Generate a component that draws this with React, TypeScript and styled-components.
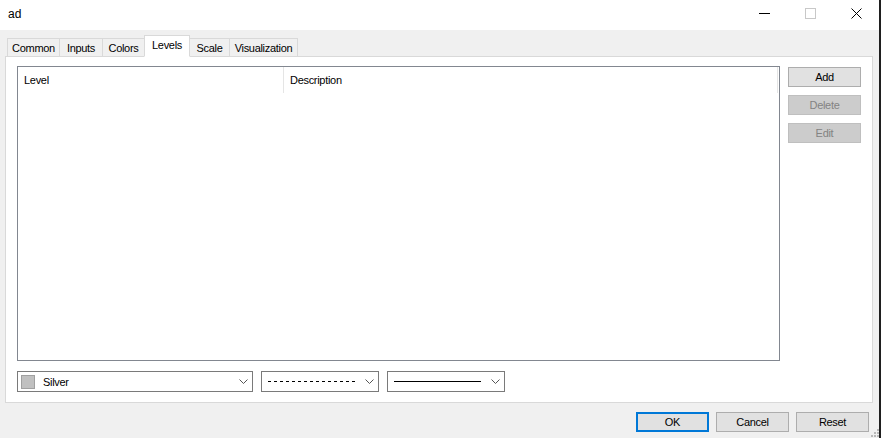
import React from "react";
import styled, { createGlobalStyle } from "styled-components";

const GlobalStyle = createGlobalStyle`
  html, body {
    margin: 0;
    padding: 0;
    background: #f0f0f0;
  }
  * {
    box-sizing: border-box;
  }
`;

const tabs = [
  { label: "Common", width: 53 },
  { label: "Inputs", width: 44 },
  { label: "Colors", width: 43 },
  { label: "Levels", width: 46 },
  { label: "Scale", width: 41 },
  { label: "Visualization", width: 69 },
];
const sideButtons = [
  { label: "Add", disabled: false },
  { label: "Delete", disabled: true },
  { label: "Edit", disabled: true },
];

const Chevron = () => (
  <svg width="9" height="6" viewBox="0 0 9 6">
    <polyline points="0.5,0.5 4.5,4.5 8.5,0.5" fill="none" stroke="#555" strokeWidth="1" />
  </svg>
);

const App: React.FC = () => {
  return (
    <Window>
      <GlobalStyle />
      <TitleBar>
        <Title>ad</Title>
        <Controls>
          <ControlBtn>
            <svg width="11" height="11" viewBox="0 0 11 11">
              <line x1="0" y1="5.5" x2="11" y2="5.5" stroke="#000" strokeWidth="1" />
            </svg>
          </ControlBtn>
          <ControlBtn>
            <svg width="11" height="11" viewBox="0 0 11 11">
              <rect x="0.5" y="0.5" width="10" height="10" fill="none" stroke="#c8c8c8" strokeWidth="1" />
            </svg>
          </ControlBtn>
          <ControlBtn>
            <svg width="11" height="11" viewBox="0 0 11 11">
              <line x1="0.5" y1="0.5" x2="10.5" y2="10.5" stroke="#000" strokeWidth="1" />
              <line x1="10.5" y1="0.5" x2="0.5" y2="10.5" stroke="#000" strokeWidth="1" />
            </svg>
          </ControlBtn>
        </Controls>
      </TitleBar>
      <Body>
        <TabStrip>
          {tabs.map((t) => (
            <Tab key={t.label} $active={t.label === "Levels"} $width={t.width}>
              {t.label}
            </Tab>
          ))}
        </TabStrip>
        <Panel>
          <MainRow>
            <ListBox>
              <ListHeader>
                <HeaderCell $width={266}>Level</HeaderCell>
                <HeaderCell $width={494}>Description</HeaderCell>
              </ListHeader>
            </ListBox>
            <SideButtons>
              {sideButtons.map((b) => (
                <Button key={b.label} disabled={b.disabled}>
                  {b.label}
                </Button>
              ))}
            </SideButtons>
          </MainRow>
          <ComboRow>
            <Combo $width={236}>
              <Swatch />
              <ComboText>Silver</ComboText>
              <Chevron />
            </Combo>
            <Combo $width={118}>
              <DashLine $dashed />
              <Chevron />
            </Combo>
            <Combo $width={118}>
              <DashLine />
              <Chevron />
            </Combo>
          </ComboRow>
        </Panel>
        <Footer>
          <Button $default>OK</Button>
          <Button>Cancel</Button>
          <Button>Reset</Button>
        </Footer>
        <Grip>
          <svg width="8" height="8" viewBox="0 0 8 8">
            {[
              [6, 0],
              [3, 3],
              [6, 3],
              [0, 6],
              [3, 6],
              [6, 6],
            ].map(([x, y]) => (
              <rect key={`${x}-${y}`} x={x} y={y} width="2" height="2" fill="#b8b8b8" />
            ))}
          </svg>
        </Grip>
      </Body>
    </Window>
  );
};

const Window = styled.div`
  width: 881px;
  height: 438px;
  display: flex;
  flex-direction: column;
  background: #f0f0f0;
  border-right: 2px solid #1f1f1f;
  font-family: "Liberation Sans", Arial, sans-serif;
  font-size: 11px;
  color: #000;
  overflow: hidden;
`;

const TitleBar = styled.div`
  height: 30px;
  flex-shrink: 0;
  background: #fff;
  display: flex;
  align-items: center;
  justify-content: space-between;
  padding-left: 8px;
`;

const Title = styled.div`
  font-size: 12px;
  margin-top: -2px;
`;

const Controls = styled.div`
  display: flex;
  align-self: stretch;
`;

const ControlBtn = styled.div`
  width: 46px;
  display: flex;
  align-items: center;
  justify-content: center;
  padding-bottom: 4px;
`;

const Body = styled.div`
  position: relative;
  flex: 1;
  display: flex;
  flex-direction: column;
  padding: 6px 6px 0 5px;
`;

const TabStrip = styled.div`
  display: flex;
  align-items: flex-end;
  height: 21px;
  padding-left: 2px;
  margin-bottom: -1px;
  position: relative;
  z-index: 1;
`;

const Tab = styled.div<{ $active?: boolean; $width: number }>`
  width: ${(p) => p.$width}px;
  height: ${(p) => (p.$active ? "22px" : "19px")};
  margin-right: -1px;
  display: flex;
  align-items: center;
  justify-content: center;
  padding-bottom: ${(p) => (p.$active ? "3px" : "0")};
  border: 1px solid #d9d9d9;
  border-bottom: ${(p) => (p.$active ? "1px solid #fff" : "1px solid #d9d9d9")};
  background: ${(p) => (p.$active ? "#fff" : "#f0f0f0")};
  position: relative;
  z-index: ${(p) => (p.$active ? 2 : 1)};
  letter-spacing: -0.3px;
  white-space: nowrap;
`;

const Panel = styled.div`
  width: 868px;
  height: 347px;
  background: #fff;
  border: 1px solid #d9d9d9;
  padding: 9px 0 0 11px;
  display: flex;
  flex-direction: column;
  gap: 10px;
`;

const MainRow = styled.div`
  display: flex;
  gap: 8px;
`;

const ListBox = styled.div`
  width: 763px;
  height: 295px;
  border: 1px solid #828790;
  background: #fff;
`;

const ListHeader = styled.div`
  display: flex;
  height: 26px;
`;

const HeaderCell = styled.div<{ $width: number }>`
  width: ${(p) => p.$width}px;
  padding-left: 6px;
  display: flex;
  align-items: center;
  border-right: 1px solid #e5e5e5;
  letter-spacing: -0.3px;
`;

const SideButtons = styled.div`
  display: flex;
  flex-direction: column;
  gap: 8px;
  padding-top: 1px;
`;

const Button = styled.button<{ $default?: boolean }>`
  width: 73px;
  height: 20px;
  padding: 0;
  font-family: inherit;
  font-size: 11px;
  letter-spacing: -0.3px;
  color: #000;
  background: #e1e1e1;
  border: 1px solid #adadad;
  ${(p) => p.$default && "border: 2px solid #0078d7;"}

  &:disabled {
    background: #cccccc;
    border-color: #bfbfbf;
    color: #838383;
  }
`;

const ComboRow = styled.div`
  display: flex;
  gap: 8px;
`;

const Combo = styled.div<{ $width: number }>`
  width: ${(p) => p.$width}px;
  height: 21px;
  border: 1px solid #7a7a7a;
  background: #fff;
  display: flex;
  align-items: center;
  padding: 0 4px 0 3px;
  gap: 8px;
`;

const Swatch = styled.div`
  width: 14px;
  height: 14px;
  background: #c0c0c0;
  border: 1px solid #a0a0a0;
`;

const ComboText = styled.div`
  flex: 1;
  letter-spacing: -0.3px;
`;

const DashLine = styled.div<{ $dashed?: boolean }>`
  flex: 1;
  height: 1px;
  margin: 0 2px 0 3px;
  background: ${(p) =>
    p.$dashed
      ? "repeating-linear-gradient(to right, #000 0 3px, transparent 3px 6px)"
      : "#000"};
`;

const Footer = styled.div`
  display: flex;
  justify-content: flex-end;
  gap: 7px;
  padding: 9px 4px 0 0;
`;

const Grip = styled.div`
  position: absolute;
  right: 0;
  bottom: 1px;
  display: flex;
`;

export default App;
